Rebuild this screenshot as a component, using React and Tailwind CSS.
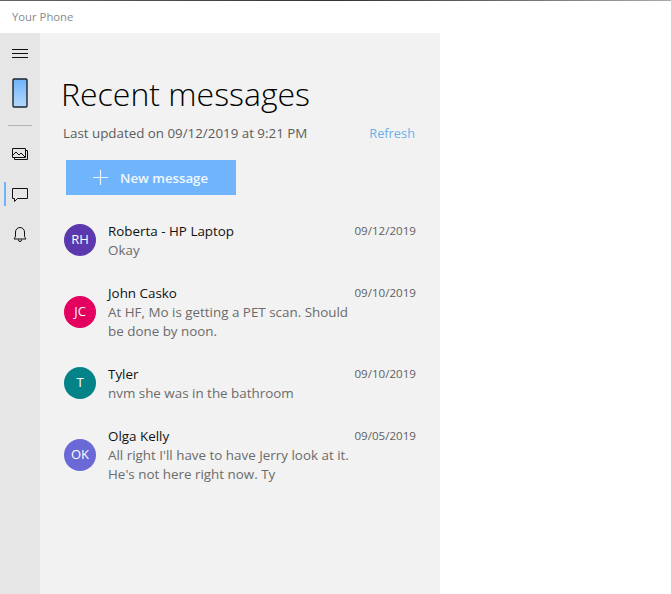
import React from "react";

const font = { fontFamily: '"Open Sans", "Noto Sans", sans-serif' };

const messages = [
  { i: "RH", c: "bg-[#5c38ae]", n: "Roberta - HP Laptop", d: "09/12/2019", t: ["Okay"], h: "h-[62px]" },
  { i: "JC", c: "bg-[#e3005f]", n: "John Casko", d: "09/10/2019", t: ["At HF, Mo is getting a PET scan. Should", "be done by noon."], h: "h-[81px]" },
  { i: "T", c: "bg-[#038387]", n: "Tyler", d: "09/10/2019", t: ["nvm she was in the bathroom"], h: "h-[62px]" },
  { i: "OK", c: "bg-[#6b69d6]", n: "Olga Kelly", d: "09/05/2019", t: ["All right I'll have to have Jerry look at it.", "He's not here right now. Ty"], h: "h-[81px]" },
];

function Message({ m }) {
  return (
    <div className={`flex ${m.h} items-center pl-[24px] pr-[24px]`}>
      <div className={`flex h-[32px] w-[32px] shrink-0 items-center justify-center rounded-full text-[13px] text-white ${m.c}`}>
        {m.i}
      </div>
      <div className="ml-[12px] min-w-0 flex-1 pt-[2px] text-[13.4px] leading-[19px] whitespace-nowrap">
        <div className="flex items-start justify-between">
          <span className="text-[#111]">{m.n}</span>
          <span className="-mt-px text-[11.6px] text-[#5f5f5f]">{m.d}</span>
        </div>
        {m.t.map((l) => (
          <div key={l} className="text-[#6b6b6b]">{l}</div>
        ))}
      </div>
    </div>
  );
}

export default function App() {
  return (
    <div className="flex h-[594px] w-[671px] flex-col overflow-hidden bg-white" style={font}>
      <div className="h-px w-full bg-gradient-to-r from-[#666] via-[#333] to-[#aaa]" />
      <div className="flex h-[32px] items-center pl-[12px] text-[11.3px] text-[#8a8a8a]">Your Phone</div>
      <div className="flex min-h-0 flex-1">
        <div className="flex w-[40px] flex-col items-center bg-[#e6e6e6]">
          <svg className="mt-[15px]" width="16" height="12" viewBox="0 0 16 12" fill="none" stroke="#111" strokeWidth="1">
            <path d="M0 1.5h16M0 5.5h16M0 9.5h16" />
          </svg>
          <svg className="mt-[18px]" width="16" height="30" viewBox="0 0 16 30">
            <defs>
              <linearGradient id="ph" x1="0" y1="0" x2="0" y2="1">
                <stop offset="0" stopColor="#6db4fb" />
                <stop offset="1" stopColor="#b5d8fb" />
              </linearGradient>
            </defs>
            <rect x="1" y="1" width="14" height="28" rx="1" fill="url(#ph)" stroke="#1c2430" strokeWidth="1.4" />
          </svg>
          <div className="mt-[17px] h-px w-[24px] bg-[#b4b4b4]" />
          <svg className="mt-[20px]" width="16" height="16" viewBox="0 0 16 16" fill="none" stroke="#111" strokeWidth="1">
            <path d="M0.5 2.5h13v9h-13z" />
            <path d="M13.5 4.500h2v9h-13v-2" />
            <path d="M1 9l3-3 3 3 2-2 4 4" />
          </svg>
          <div className="relative mt-[20px] flex h-[24px] w-[40px] items-center justify-center">
            <div className="absolute left-[4px] top-0 h-[24px] w-[2px] bg-[#6fb4fb]" />
            <svg width="16" height="16" viewBox="0 0 16 16" fill="none" stroke="#111" strokeWidth="1">
              <path d="M0.5 2.5h15v10H5.5l-3 3v-3h-2z" />
            </svg>
          </div>
          <svg className="mt-[20px]" width="14" height="16" viewBox="0 0 14 16" fill="none" stroke="#111" strokeWidth="1">
            <path d="M7 1.500a4.500 4.500 0 0 0-4.500 4.500v4c0 1-1 2-1.500 3h12c-.5-1-1.500-2-1.500-3V6A4.500 4.500 0 0 0 7 1.500z" />
            <path d="M5.500 13.500v.5a1.500 1.500 0 0 0 3 0v-.5" />
          </svg>
        </div>
        <div className="w-[400px] bg-[#f2f2f2]">
          <h1 className="mt-[38px] ml-[21px] text-[32px] font-light leading-[46px] text-black">Recent messages</h1>
          <div className="mt-[6px] ml-[23px] mr-[25px] flex items-center justify-between text-[13.35px] leading-[20px]">
            <span className="text-[#5c5c5c]">Last updated on 09/12/2019 at 9:21 PM</span>
            <span className="text-[12.8px] text-[#6cb0ea]">Refresh</span>
          </div>
          <div className="mt-[17px] ml-[26px] flex h-[35px] w-[170px] items-center bg-[#70b5fb] pl-[27px] text-[13.25px] font-semibold text-white/90">
            <svg width="15" height="15" viewBox="0 0 15 15" stroke="#fff" strokeOpacity="0.85" strokeWidth="1.200">
              <path d="M7.500 0v15M0 7.500h15" />
            </svg>
            <span className="ml-[12px] pt-[2px]">New message</span>
          </div>
          <div className="mt-[14px]">
            {messages.map((m) => (
              <Message key={m.n} m={m} />
            ))}
          </div>
        </div>
      </div>
    </div>
  );
}
